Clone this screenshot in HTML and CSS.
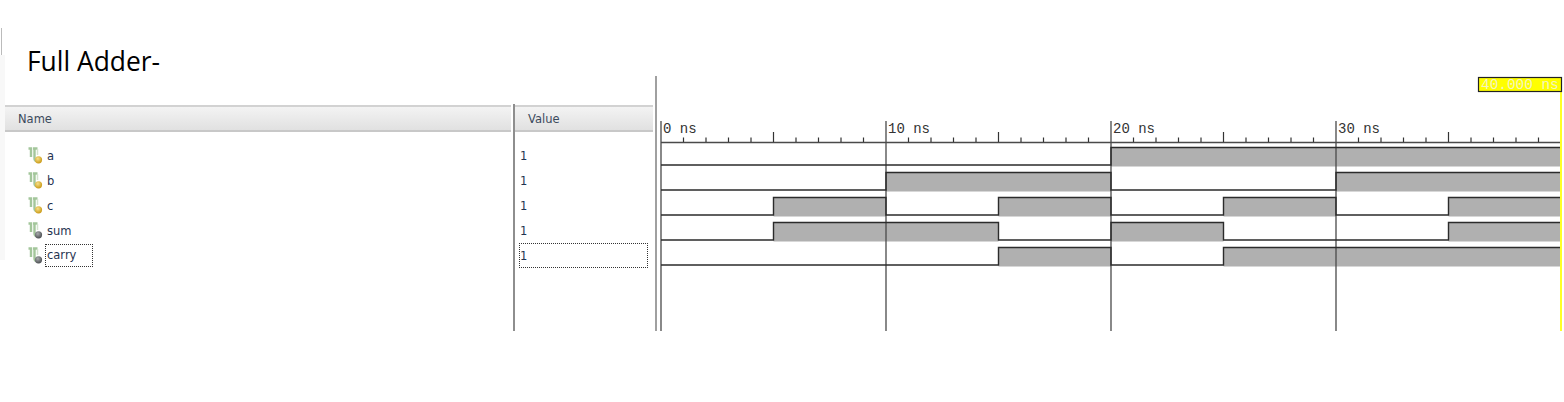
FILE: index.html
```html
<!DOCTYPE html>
<html lang="en">
<head>
    <meta charset="UTF-8">
    <title>Full Adder</title>
    <link rel="stylesheet" href="styles.css">
</head>
<body>
    <svg class="defs" width="0" height="0">
        <defs>
            <radialGradient id="gold" cx="0.4" cy="0.35" r="0.7">
                <stop offset="0" stop-color="#f6e08a"/>
                <stop offset="1" stop-color="#c8960f"/>
            </radialGradient>
            <radialGradient id="steel" cx="0.4" cy="0.35" r="0.7">
                <stop offset="0" stop-color="#a8abad"/>
                <stop offset="1" stop-color="#46494c"/>
            </radialGradient>
        </defs>
        <symbol id="sig-in" viewBox="0 0 16 17">
            <path class="sig-stem" d="M0.5 1.5H3V10"/>
            <path class="sig-stem" d="M5 1.5H9.5M6.5 1.5V11.5Q6.5 13.5 8.5 14"/>
            <path class="sig-pale" d="M9.5 2V8"/>
            <circle class="dot-in" cx="10.5" cy="12.8" r="3.6"/>
        </symbol>
        <symbol id="sig-out" viewBox="0 0 16 17">
            <path class="sig-stem" d="M0.5 1.5H3V10"/>
            <path class="sig-stem" d="M5 1.5H9.5M6.5 1.5V11.5Q6.5 13.5 8.5 14"/>
            <path class="sig-pale" d="M9.5 2V8"/>
            <circle class="dot-out" cx="10.5" cy="12.8" r="3.6"/>
        </symbol>
    </svg>

    <div class="page">
        <div class="edge">
            <div class="edge-mark"></div>
            <div class="edge-fill"></div>
        </div>
        <div class="main">
            <h1 class="title">Full Adder-</h1>
            <div class="viewer">
                <div class="col col-name">
                    <div class="col-head">Name</div>
                    <div class="row"><svg class="sig"><use href="#sig-in"/></svg><span>a</span></div>
                    <div class="row"><svg class="sig"><use href="#sig-in"/></svg><span>b</span></div>
                    <div class="row"><svg class="sig"><use href="#sig-in"/></svg><span>c</span></div>
                    <div class="row"><svg class="sig"><use href="#sig-out"/></svg><span>sum</span></div>
                    <div class="row"><svg class="sig"><use href="#sig-out"/></svg><span class="focus">carry</span></div>
                </div>
                <div class="value-pane">
                    <div class="col col-value">
                        <div class="col-head">Value</div>
                        <div class="row">1</div>
                        <div class="row">1</div>
                        <div class="row">1</div>
                        <div class="row">1</div>
                        <div class="row row-focus">1</div>
                    </div>
                </div>
                <svg class="wave" width="907" height="255" viewBox="657 76 907 255">
                    <!-- high parts of each signal -->
                    <g class="high">
                        <rect x="1111" y="147" width="450" height="19.5"/>
                        <rect x="886" y="172" width="225" height="19.5"/>
                        <rect x="1336" y="172" width="225" height="19.5"/>
                        <rect x="773.5" y="197" width="112.5" height="19.5"/>
                        <rect x="998.5" y="197" width="112.5" height="19.5"/>
                        <rect x="1223.5" y="197" width="112.5" height="19.5"/>
                        <rect x="1448.5" y="197" width="112.5" height="19.5"/>
                        <rect x="773.5" y="222" width="225" height="19.5"/>
                        <rect x="1111" y="222" width="112.5" height="19.5"/>
                        <rect x="1448.5" y="222" width="112.5" height="19.5"/>
                        <rect x="998.5" y="247" width="112.5" height="19.5"/>
                        <rect x="1223.5" y="247" width="337.5" height="19.5"/>
                    </g>
                    <!-- time grid and ruler -->
                    <path class="grid" d="M661 121V331M886 121V331M1111 121V331M1336 121V331M661 142.5H1561"/>
                    <path class="tick" d="M683.5 137.5V142M706 137.5V142M728.5 137.5V142M751 137.5V142M773.5 132V142
                        M796 137.5V142M818.5 137.5V142M841 137.5V142M863.5 137.5V142
                        M908.5 137.5V142M931 137.5V142M953.5 137.5V142M976 137.5V142M998.5 132V142
                        M1021 137.5V142M1043.5 137.5V142M1066 137.5V142M1088.5 137.5V142
                        M1133.5 137.5V142M1156 137.5V142M1178.5 137.5V142M1201 137.5V142M1223.5 132V142
                        M1246 137.5V142M1268.5 137.5V142M1291 137.5V142M1313.5 137.5V142
                        M1358.5 137.5V142M1381 137.5V142M1403.5 137.5V142M1426 137.5V142M1448.5 132V142
                        M1471 137.5V142M1493.5 137.5V142M1516 137.5V142M1538.5 137.5V142"/>
                    <text class="ruler" x="663" y="133">0 ns</text>
                    <text class="ruler" x="888" y="133">10 ns</text>
                    <text class="ruler" x="1113" y="133">20 ns</text>
                    <text class="ruler" x="1338" y="133">30 ns</text>
                    <!-- signal traces -->
                    <g class="trace">
                        <path d="M661 165H1111V147.5H1561"/>
                        <path d="M661 190H886V172.5H1111V190H1336V172.5H1561"/>
                        <path d="M661 215H773.5V197.5H886V215H998.5V197.5H1111V215H1223.5V197.5H1336V215H1448.5V197.5H1561"/>
                        <path d="M661 240H773.5V222.5H998.5V240H1111V222.5H1223.5V240H1448.5V222.5H1561"/>
                        <path d="M661 265H998.5V247.5H1111V265H1223.5V247.5H1561"/>
                    </g>
                    <!-- cursor -->
                    <path class="cursor" d="M1561 92V331"/>
                    <rect class="cursor-box" x="1478.5" y="77.5" width="83" height="14"/>
                    <text class="cursor-text" x="1481" y="89">40.000 ns</text>
                </svg>
            </div>
        </div>
    </div>
</body>
</html>
```

FILE: styles.css
```css
body {
    margin: 0;
    background-color: #fff;
    font-family: "Open Sans", sans-serif;
}
.defs {
    display: block;
    height: 0;
}
.page {
    display: flex;
    height: 402px;
}
.edge {
    width: 5px;
    flex: none;
}
.edge-mark {
    height: 27px;
    margin-top: 28px;
    margin-left: 1px;
    width: 1px;
    background-color: #bbb;
}
.edge-fill {
    height: 205px;
    background-color: #f8f8f8;
}
.main {
    flex: 1;
    min-width: 0;
}
.title {
    height: 76px;
    margin: 0;
    padding: 43px 0 0 22px;
    box-sizing: border-box;
    font-size: 26.4px;
    font-weight: 400;
    line-height: 36px;
    color: #000;
}
.viewer {
    display: flex;
    height: 255px;
}
.col {
    box-sizing: border-box;
    font-family: "DejaVu Sans", sans-serif;
    font-size: 11.5px;
    color: #1f3350;
}
.col-name {
    flex: none;
    width: 508px;
    padding-top: 29px;
}
.value-pane {
    flex: none;
    width: 144px;
    box-sizing: border-box;
    border-right: 2px solid #a0a0a0;
}
.col-value {
    height: 227px;
    margin-top: 28px;
    padding-top: 1px;
    border-left: 2px solid #8e8e8e;
}
.col-head {
    display: flex;
    align-items: center;
    height: 27px;
    box-sizing: border-box;
    padding-left: 13px;
    margin-right: 2px;
    background: linear-gradient(#f3f3f3, #e1e1e1);
    border-top: 2px solid #d2d2d2;
    border-bottom: 2px solid #c8c8c8;
    color: #3b4a5c;
}
.row {
    display: flex;
    align-items: center;
    height: 25px;
    padding-left: 23px;
}
.row:nth-child(2) {
    margin-top: 11px;
}
.col-value .row {
    padding-left: 5px;
}
.sig {
    width: 16px;
    height: 17px;
    margin-right: 3px;
}
.sig-stem {
    fill: none;
    stroke: #a3c69b;
    stroke-width: 2.4;
}
.sig-pale {
    fill: none;
    stroke: #d3e3cd;
    stroke-width: 1.5;
}
.dot-in {
    fill: url(#gold);
}
.dot-out {
    fill: url(#steel);
}
.focus {
    outline: 1px dotted #333;
    padding: 3px 16px 4px 1px;
    margin-left: -1px;
}
.col-value .row-focus {
    outline: 1px dotted #333;
    outline-offset: -1px;
    margin: 0 7px 0 4px;
    padding-left: 1px;
}
.wave {
    flex: none;
    display: block;
}
.high rect {
    fill: #b0b0b0;
}
.grid {
    fill: none;
    stroke: #4a4a4a;
    stroke-width: 1.3;
}
.tick {
    fill: none;
    stroke: #333;
    stroke-width: 1.2;
}
.trace path {
    fill: none;
    stroke: #2b2b2b;
    stroke-width: 1.4;
}
.ruler {
    font-family: "Liberation Mono", monospace;
    font-size: 14px;
    fill: #333;
}
.cursor {
    stroke: #ffff26;
    stroke-width: 2;
}
.cursor-box {
    fill: #ffff00;
    stroke: #222;
    stroke-width: 1.2;
}
.cursor-text {
    font-family: "Liberation Mono", monospace;
    font-size: 14.4px;
    fill: #f4f4c0;
}
```
